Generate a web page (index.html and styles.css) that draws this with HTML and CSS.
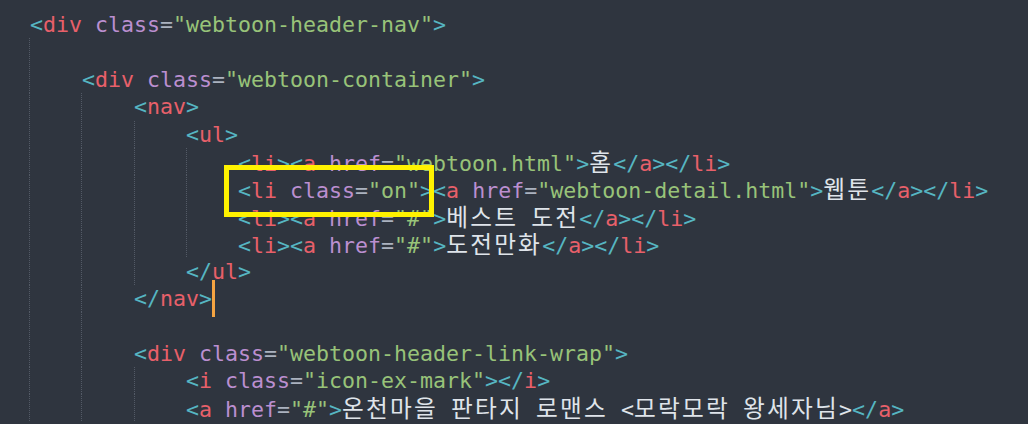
FILE: index.html
```html
<!DOCTYPE html>
<html lang="ko">
<head>
  <meta charset="UTF-8" />
  <meta name="viewport" content="width=device-width, initial-scale=1.0"/>
  <title>webtoon-header-nav</title>
  <link rel="stylesheet" href="styles.css">
</head>
<body>
  <div class="editor">
    <div class="line i0"><span class="p">&lt;</span><span class="t">div</span> <span class="n">class</span><span class="e">=</span><span class="s">"webtoon-header-nav"</span><span class="p">&gt;</span></div>
    <div class="line i0 g1"></div>
    <div class="line i1 g1"><span class="p">&lt;</span><span class="t">div</span> <span class="n">class</span><span class="e">=</span><span class="s">"webtoon-container"</span><span class="p">&gt;</span></div>
    <div class="line i2 g2"><span class="p">&lt;</span><span class="t">nav</span><span class="p">&gt;</span></div>
    <div class="line i3 g3"><span class="p">&lt;</span><span class="t">ul</span><span class="p">&gt;</span></div>
    <div class="line i4 g4"><span class="p">&lt;</span><span class="t">li</span><span class="p">&gt;&lt;</span><span class="t">a</span> <span class="n">href</span><span class="e">=</span><span class="s">"webtoon.html"</span><span class="p">&gt;</span><span class="k">홈</span><span class="p">&lt;/</span><span class="t">a</span><span class="p">&gt;&lt;/</span><span class="t">li</span><span class="p">&gt;</span></div>
    <div class="line i4 g4"><span class="p">&lt;</span><span class="t">li</span> <span class="n">class</span><span class="e">=</span><span class="s">"on"</span><span class="p">&gt;&lt;</span><span class="t">a</span> <span class="n">href</span><span class="e">=</span><span class="s">"webtoon-detail.html"</span><span class="p">&gt;</span><span class="k">웹툰</span><span class="p">&lt;/</span><span class="t">a</span><span class="p">&gt;&lt;/</span><span class="t">li</span><span class="p">&gt;</span></div>
    <div class="line i4 g4"><span class="p">&lt;</span><span class="t">li</span><span class="p">&gt;&lt;</span><span class="t">a</span> <span class="n">href</span><span class="e">=</span><span class="s">"#"</span><span class="p">&gt;</span><span class="k">베스트</span><span class="w"> </span><span class="k">도전</span><span class="p">&lt;/</span><span class="t">a</span><span class="p">&gt;&lt;/</span><span class="t">li</span><span class="p">&gt;</span></div>
    <div class="line i4 g4"><span class="p">&lt;</span><span class="t">li</span><span class="p">&gt;&lt;</span><span class="t">a</span> <span class="n">href</span><span class="e">=</span><span class="s">"#"</span><span class="p">&gt;</span><span class="k">도전만화</span><span class="p">&lt;/</span><span class="t">a</span><span class="p">&gt;&lt;/</span><span class="t">li</span><span class="p">&gt;</span></div>
    <div class="line i3 g3"><span class="p">&lt;/</span><span class="t">ul</span><span class="p">&gt;</span></div>
    <div class="line i2 g2"><span class="p">&lt;/</span><span class="t">nav</span><span class="p">&gt;</span><span class="cursor"></span></div>
    <div class="line i0 g2"></div>
    <div class="line i2 g2"><span class="p">&lt;</span><span class="t">div</span> <span class="n">class</span><span class="e">=</span><span class="s">"webtoon-header-link-wrap"</span><span class="p">&gt;</span></div>
    <div class="line i3 g3"><span class="p">&lt;</span><span class="t">i</span> <span class="n">class</span><span class="e">=</span><span class="s">"icon-ex-mark"</span><span class="p">&gt;&lt;/</span><span class="t">i</span><span class="p">&gt;</span></div>
    <div class="line i3 g3"><span class="p">&lt;</span><span class="t">a</span> <span class="n">href</span><span class="e">=</span><span class="s">"#"</span><span class="p">&gt;</span><span class="k">온천마을</span><span class="w"> </span><span class="k">판타지</span><span class="w"> </span><span class="k">로맨스</span><span class="w"> &lt;</span><span class="k">모락모락</span><span class="w"> </span><span class="k">왕세자님</span><span class="w">&gt;</span><span class="p">&lt;/</span><span class="t">a</span><span class="p">&gt;</span></div>

    <!-- 강조 표시 -->
    <div class="highlight"></div>
  </div>
</body>
</html>
```

FILE: styles.css
```css
html, body {
  margin: 0;
  background: #2f353f;
}

.editor {
  position: relative;
  height: 424px;
  padding-top: 11px;
  box-sizing: border-box;
  overflow: hidden;
  font-family: "DejaVu Sans Mono", "Noto Sans CJK KR", monospace;
  font-size: 21.6px;
  color: #dfe4ea;
}

.line {
  height: 27.4px;
  line-height: 27.4px;
  white-space: pre;
  background-repeat: repeat-y;
  background-size: 1px 2px;
}

.i0 { padding-left: 30px; }
.i1 { padding-left: 82px; }
.i2 { padding-left: 134px; }
.i3 { padding-left: 186px; }
.i4 { padding-left: 238px; }

/* 들여쓰기 가이드 */
.g1 {
  background-image: linear-gradient(#535a66 50%, transparent 50%);
  background-position: 29px 0;
}

.g2 {
  background-image:
    linear-gradient(#535a66 50%, transparent 50%),
    linear-gradient(#535a66 50%, transparent 50%);
  background-position: 29px 0, 81px 0;
}

.g3 {
  background-image:
    linear-gradient(#535a66 50%, transparent 50%),
    linear-gradient(#535a66 50%, transparent 50%),
    linear-gradient(#535a66 50%, transparent 50%);
  background-position: 29px 0, 81px 0, 134px 0;
}

.g4 {
  background-image:
    linear-gradient(#535a66 50%, transparent 50%),
    linear-gradient(#535a66 50%, transparent 50%),
    linear-gradient(#535a66 50%, transparent 50%),
    linear-gradient(#535a66 50%, transparent 50%);
  background-position: 29px 0, 81px 0, 134px 0, 186px 0;
}

.p { color: #56b6c2; }
.t { color: #e8606a; }
.n { color: #bb8fd0; }
.e { color: #abb2bf; }
.s { color: #98c379; }
.w { color: #dfe4ea; }

.k {
  font-family: "Noto Sans CJK KR", sans-serif;
  font-size: 23.7px;
  letter-spacing: 2.2px;
  color: #dfe4ea;
}

.cursor {
  display: inline-block;
  width: 3px;
  height: 37px;
  margin-top: -5px;
  vertical-align: top;
  background: #f5a442;
}

.highlight {
  position: absolute;
  left: 224px;
  top: 165px;
  width: 210px;
  height: 52px;
  box-sizing: border-box;
  border: 5px solid #fff200;
}
```
